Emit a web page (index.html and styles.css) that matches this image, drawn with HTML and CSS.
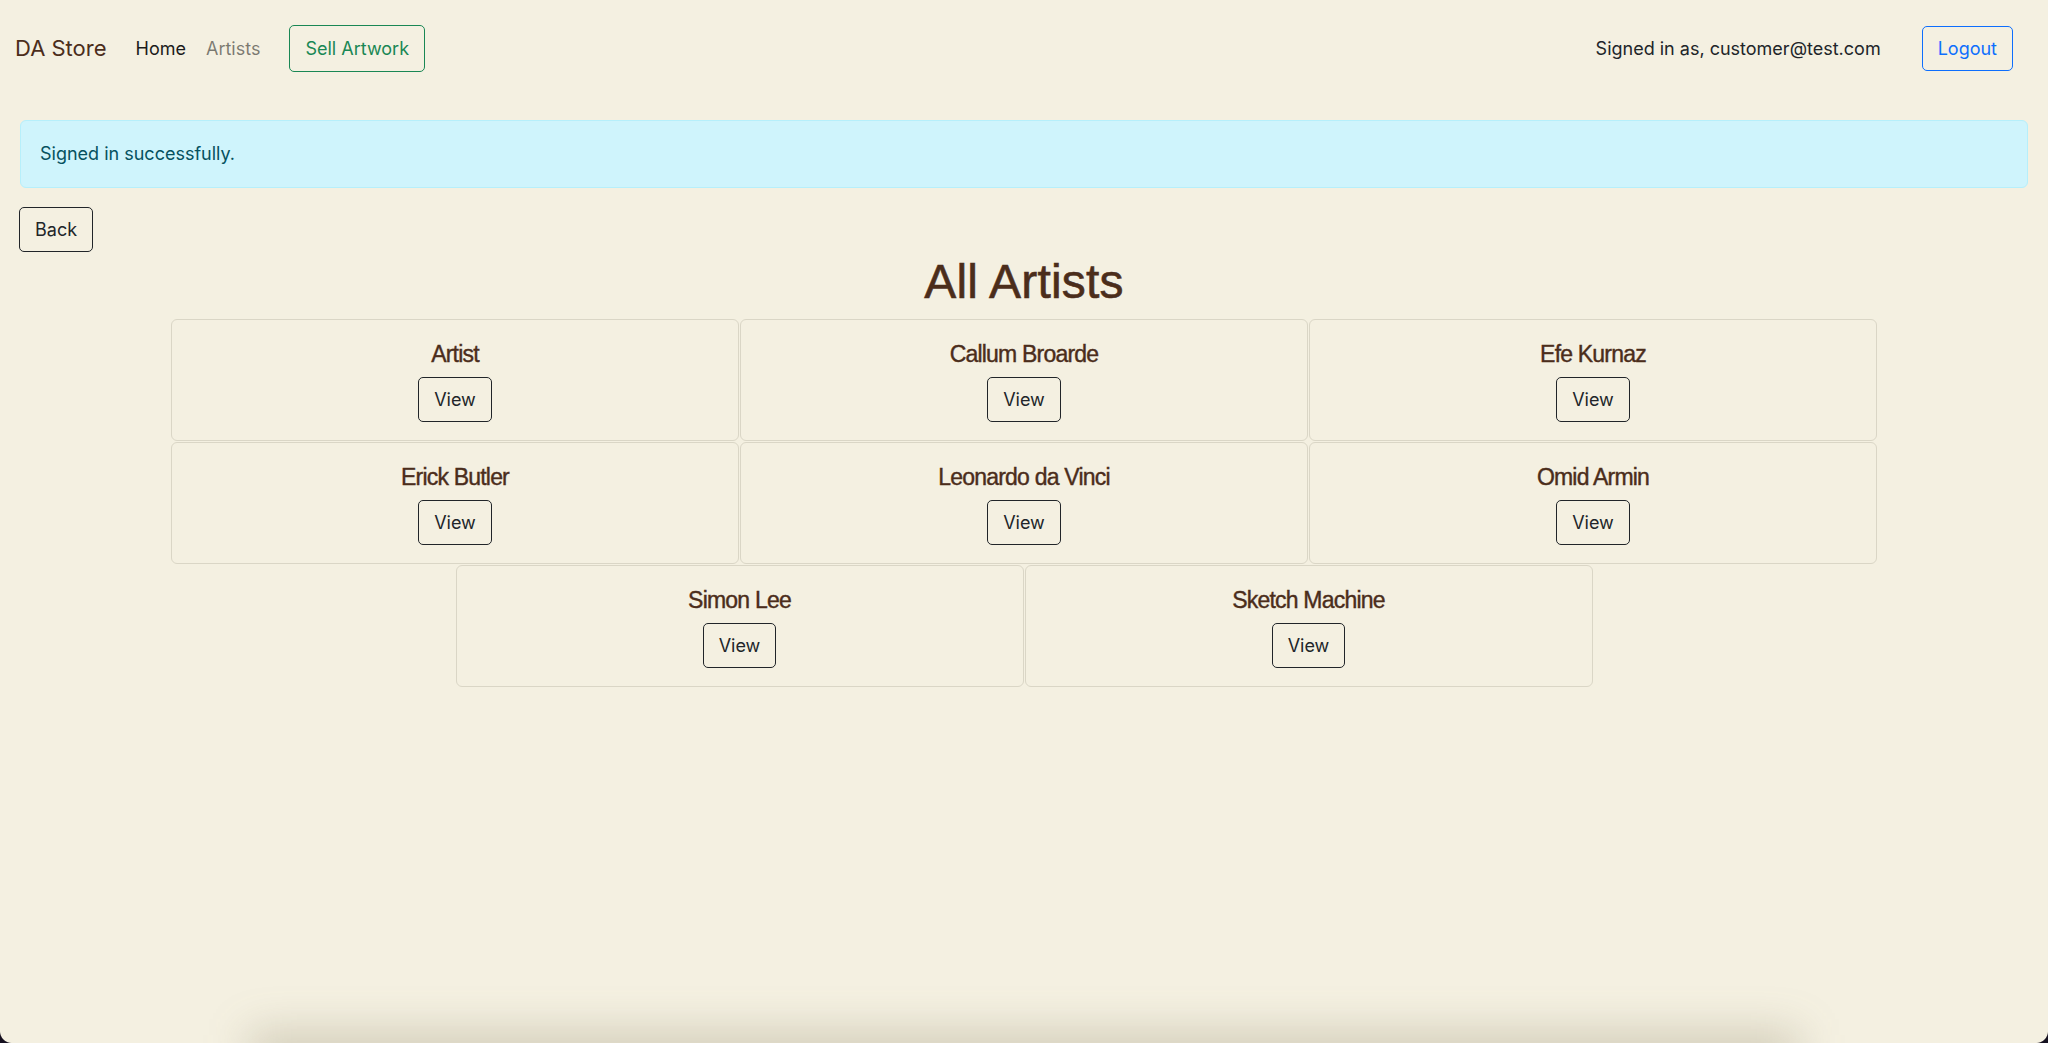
FILE: index.html
```html
<!DOCTYPE html>
<html lang="en">
<head>
<meta charset="utf-8">
<title>DA Store</title>
<link rel="stylesheet" href="styles.css">
</head>
<body>
<nav class="navbar">
  <a class="brand" href="#">DA Store</a>
  <a class="nav-link active" href="#">Home</a>
  <a class="nav-link" href="#">Artists</a>
  <a class="btn btn-success" href="#">Sell Artwork</a>
  <div class="nav-right">
    <span class="signed">Signed in as, customer@test.com</span>
    <a class="btn btn-primary" href="#">Logout</a>
  </div>
</nav>
<div class="alert">Signed in successfully.</div>
<main class="content">
  <div class="back-row"><a class="btn btn-dark" href="#">Back</a></div>
  <h1 class="title">All Artists</h1>
  <div class="grid">
    <div class="card"><h5 class="card-title">Artist</h5><a class="btn btn-dark" href="#">View</a></div>
    <div class="card"><h5 class="card-title">Callum Broarde</h5><a class="btn btn-dark" href="#">View</a></div>
    <div class="card"><h5 class="card-title">Efe Kurnaz</h5><a class="btn btn-dark" href="#">View</a></div>
    <div class="card"><h5 class="card-title">Erick Butler</h5><a class="btn btn-dark" href="#">View</a></div>
    <div class="card"><h5 class="card-title">Leonardo da Vinci</h5><a class="btn btn-dark" href="#">View</a></div>
    <div class="card"><h5 class="card-title">Omid Armin</h5><a class="btn btn-dark" href="#">View</a></div>
    <div class="card"><h5 class="card-title">Simon Lee</h5><a class="btn btn-dark" href="#">View</a></div>
    <div class="card"><h5 class="card-title">Sketch Machine</h5><a class="btn btn-dark" href="#">View</a></div>
  </div>
</main>
<div class="bottom-shade"></div>
<div class="corner corner-left"></div>
<div class="corner corner-right"></div>
</body>
</html>
```
FILE: styles.css
```css
* { box-sizing: border-box; }
html, body { height: 100%; }
body {
  margin: 0;
  background: #f4f0e1;
  color: #212529;
  font-family: Inter, "Noto Sans", "DejaVu Sans", sans-serif;
  font-size: 18px;
  line-height: 1.5;
  overflow: hidden;
}
a { text-decoration: none; }

.navbar {
  display: flex;
  align-items: center;
  height: 47px;
  margin-top: 25px;
  padding: 0 35px 0 15px;
}
.brand {
  font-size: 22px;
  color: #4b2d1b;
  margin-right: 29px;
}
.nav-link {
  color: rgba(0, 0, 0, 0.5);
  margin-right: 20px;
}
.nav-link.active { color: #1b1b1b; }
.nav-link + .btn { margin-left: 9px; }
.nav-right {
  margin-left: auto;
  display: flex;
  align-items: center;
  gap: 41px;
}
.signed { color: #212529; }

.btn {
  display: inline-block;
  border: 1px solid;
  border-radius: 5px;
  padding: 8px 15px;
  line-height: 27px;
  font-size: 18px;
  background: transparent;
}
.btn-success { color: #198754; border-color: #198754; padding: 9px 15px; }
.btn-primary { color: #0d6efd; border-color: #0d6efd; }
.btn-dark { color: #212529; border-color: #212529; }

.alert {
  margin: 48px 20px 0;
  padding: 20px 19px;
  background: #cff4fc;
  border: 1px solid #b6effb;
  border-radius: 6px;
  color: #055160;
  line-height: 26px;
}

.content { padding: 0; }
.back-row { padding: 19px 0 0 19px; height: 65px; }

.title {
  margin: 1px 0 10px;
  text-align: center;
  font-family: "Liberation Sans", Arial, sans-serif;
  font-weight: 400;
  font-size: 48px;
  line-height: 55px;
  color: #4b2d1b;
  letter-spacing: 0.2px;
  -webkit-text-stroke: 0.6px #4b2d1b;
}

.grid {
  display: flex;
  flex-wrap: wrap;
  justify-content: center;
  gap: 1px;
  width: 1706px;
  margin: 0 auto;
}
.card {
  width: 568px;
  height: 122px;
  border: 1px solid #dad6c6;
  border-radius: 6px;
  padding: 20px 16px 17px;
  text-align: center;
}
.card-title {
  margin: 0 0 8px;
  font-family: "Liberation Sans", Arial, sans-serif;
  font-weight: 400;
  font-size: 23px;
  line-height: 29px;
  color: #4b2d1b;
  letter-spacing: -0.8px;
  -webkit-text-stroke: 0.4px #4b2d1b;
}
.card .btn { padding: 8px 15px; }

.bottom-shade {
  position: fixed;
  left: 250px;
  right: 250px;
  bottom: -30px;
  height: 40px;
  background: rgba(110, 100, 70, 0.28);
  filter: blur(22px);
  pointer-events: none;
}
.corner {
  position: fixed;
  bottom: 0;
  width: 12px;
  height: 12px;
}
.corner-left {
  left: 0;
  background: radial-gradient(circle at 100% 0, transparent 11.5px, #15101f 12.5px);
}
.corner-right {
  right: 0;
  background: radial-gradient(circle at 0 0, transparent 11.5px, #15101f 12.5px);
}
```
